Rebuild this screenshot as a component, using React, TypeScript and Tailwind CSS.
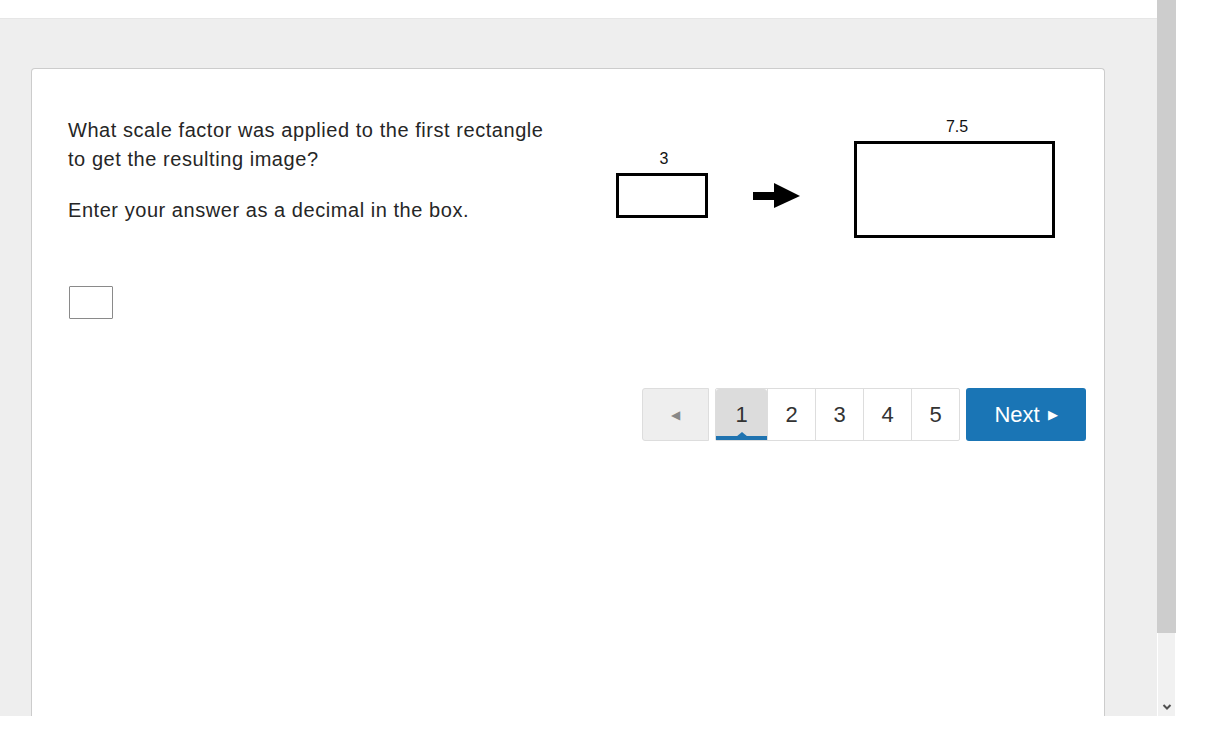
import React from 'react';

const Diagram: React.FC = () => (
  <svg width="470" height="140" viewBox="0 0 470 140" className="block">
    <text x="64" y="54" textAnchor="middle" fontSize="16" fontFamily="'Liberation Sans', Arial, sans-serif" fill="#111">
      3
    </text>
    <rect x="17.5" y="64.5" width="89" height="42" fill="none" stroke="#000" strokeWidth="3" />
    <rect x="153" y="82" width="23" height="8" fill="#000" />
    <polygon points="174,73 200,86 174,98" fill="#000" />
    <text x="357" y="22" textAnchor="middle" fontSize="16" fontFamily="'Liberation Sans', Arial, sans-serif" fill="#111">
      7.5
    </text>
    <rect x="255.5" y="32.5" width="198" height="94" fill="none" stroke="#000" strokeWidth="3" />
  </svg>
);

const Pager: React.FC = () => {
  const pages = [1, 2, 3, 4, 5];
  return (
    <div className="flex items-stretch h-[53px] text-[22px] text-[#333]">
      <button className="w-[67px] bg-[#eeeeee] border border-[#dddddd] rounded-l-[3px] flex items-center justify-center text-[#888] text-[12px]">
        ◀
      </button>
      <div className="ml-[6px] flex border border-[#dddddd] rounded-[2px] bg-white">
        {pages.map((p) =>
          p === 1 ? (
            <div key={p} className="relative w-[51px] bg-[#dcdcdc] rounded-t-[3px] flex items-center justify-center">
              1
              <span className="absolute left-0 right-0 bottom-0 h-[4px] bg-[#1f73b0]" />
              <span className="absolute left-1/2 -translate-x-1/2 bottom-[3px] w-0 h-0 border-l-[6px] border-r-[6px] border-b-[5px] border-l-transparent border-r-transparent border-b-[#1f73b0]" />
            </div>
          ) : (
            <div key={p} className="w-[48px] border-l border-[#dddddd] flex items-center justify-center">
              {p}
            </div>
          )
        )}
      </div>
      <button className="ml-[6px] w-[120px] bg-[#1a75b5] rounded-[3px] text-white flex items-center justify-center gap-[8px]">
        Next <span className="text-[13px]">▶</span>
      </button>
    </div>
  );
};

export default function App() {
  return (
    <div className="w-[1213px] h-[738px] bg-white overflow-hidden" style={{ fontFamily: "'Liberation Sans', Arial, sans-serif" }}>
      <div className="flex h-[716px]">
        <div className="w-[1157px] flex flex-col">
          <div className="h-[19px] bg-white border-b border-[#e6e6e6]" />
          <div className="flex-1 bg-[#eeeeee] pt-[49px] pl-[31px] pr-[52px] flex flex-col">
            <div className="flex-1 bg-white border border-b-0 border-[#cccccc] rounded-t-[4px] pl-[36px] pr-[18px] pt-[47px]">
              <div className="flex">
                <div className="w-[500px] pr-[8px] text-[20px] tracking-[0.55px] leading-[29px] text-[#262626]">
                  <p>What scale factor was applied to the first rectangle to get the resulting image?</p>
                  <p className="mt-[22px]">Enter your answer as a decimal in the box.</p>
                  <input className="mt-[61px] ml-[1px] block w-[44px] h-[33px] border border-[#8a8a8a] rounded-[1px] bg-white" />
                </div>
                <div className="-mt-[6px] ml-[32px]">
                  <Diagram />
                </div>
              </div>
              <div className="mt-[69px] flex justify-end">
                <Pager />
              </div>
            </div>
          </div>
        </div>
        <div className="w-[19px] flex flex-col bg-[#f1f1f1]">
          <div className="h-[633px] bg-[#cdcdcd]" />
          <div className="flex-1 border-x border-white flex items-end justify-center pb-[5px]">
            <svg width="10" height="8" viewBox="0 0 10 8">
              <path d="M1.5 2 L5 5.5 L8.5 2" fill="none" stroke="#505050" strokeWidth="2" />
            </svg>
          </div>
        </div>
      </div>
    </div>
  );
}
